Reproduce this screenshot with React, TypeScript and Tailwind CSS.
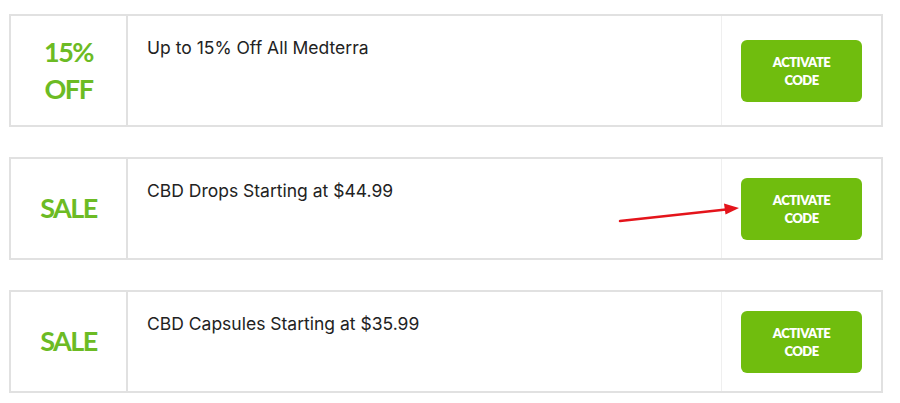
import React from "react";

type Deal = { label: string[]; text: string; h: string };

const deals: Deal[] = [
  { label: ["15%", "OFF"], text: "Up to 15% Off All Medterra", h: "h-[113px]" },
  { label: ["SALE"], text: "CBD Drops Starting at $44.99", h: "h-[103px]" },
  { label: ["SALE"], text: "CBD Capsules Starting at $35.99", h: "h-[103px]" },
];

function Card({ deal }: { deal: Deal }) {
  return (
    <div className={`flex w-[874px] ${deal.h} border-2 border-[#e1e1e1] bg-white`}>
      <div className="flex w-[117px] shrink-0 flex-col items-center justify-center border-r-2 border-[#e1e1e1] pb-[2px]">
        {deal.label.map((l) => (
          <div
            key={l}
            className="text-[27px] leading-[37px] font-bold tracking-[-1.5px] text-[#6cbb24]"
            style={{ fontFamily: "Lato, 'Open Sans', sans-serif" }}
          >
            {l}
          </div>
        ))}
      </div>
      <div
        className="flex-1 pl-[19px] pt-[19px] text-[17.5px] leading-[25px] text-[#222]"
        style={{ fontFamily: "Inter, 'Liberation Sans', sans-serif" }}
      >
        {deal.text}
      </div>
      <div className="flex w-[160px] shrink-0 items-center justify-center border-l border-[#efefef]">
        <button
          className="flex h-[62px] w-[121px] flex-col items-center justify-center rounded-[6px] bg-[#70bd0e] text-[13px] leading-[18px] font-extrabold tracking-[-0.5px] text-white"
          style={{ fontFamily: "Lato, 'Open Sans', sans-serif" }}
        >
          <span>ACTIVATE</span>
          <span>CODE</span>
        </button>
      </div>
    </div>
  );
}

export default function App() {
  return (
    <div className="relative h-[403px] w-[900px] overflow-hidden bg-white pl-[9px] pt-[14px]">
      <div className="flex flex-col gap-[30px]">
        {deals.map((d, i) => (
          <Card key={i} deal={d} />
        ))}
      </div>
      <svg
        className="absolute left-0 top-0"
        width="900"
        height="403"
        viewBox="0 0 900 403"
      >
        <line x1="620" y1="221" x2="726" y2="209.5" stroke="#e4141b" strokeWidth="2.5" strokeLinecap="round" />
        <polygon points="739,208 724,203.5 725.5,214.5" fill="#e4141b" />
      </svg>
    </div>
  );
}
